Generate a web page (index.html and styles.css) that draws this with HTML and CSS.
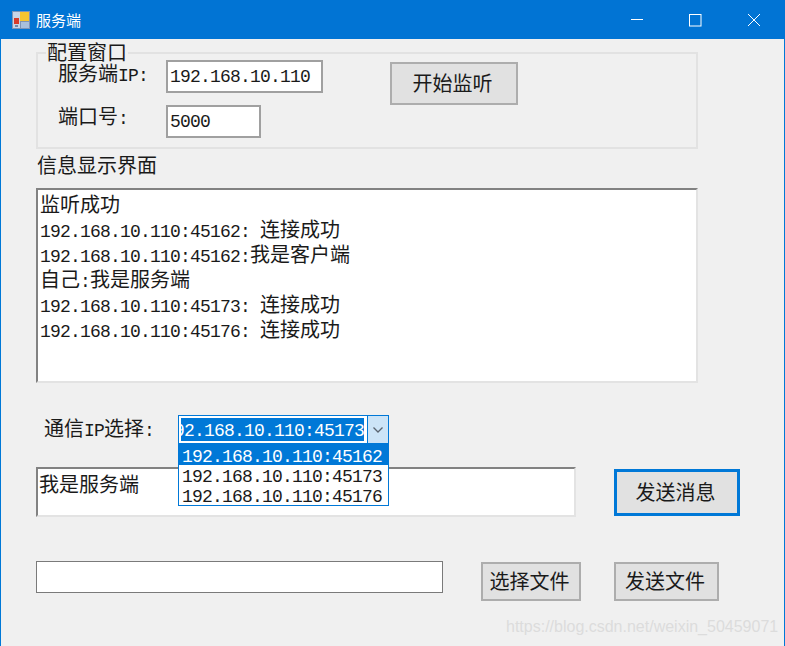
FILE: index.html
```html
<!DOCTYPE html>
<html lang="zh">
<head>
<meta charset="utf-8">
<title>服务端</title>
<link rel="stylesheet" href="styles.css">
</head>
<body>
<div class="window">
  <header class="titlebar">
    <svg class="app-icon" width="18" height="18" viewBox="0 0 18 18">
      <rect x="0" y="0" width="18" height="18" fill="#7f93b5"/>
      <rect x="1" y="1" width="7" height="16" fill="#c9d4e6"/>
      <rect x="2" y="7" width="5" height="6" fill="#d83a2a"/>
      <rect x="3" y="14" width="3" height="2" fill="#6f86ab"/>
      <rect x="8" y="1" width="9" height="9" fill="#f6c531"/>
      <rect x="9" y="11" width="8" height="6" fill="#a9bfdc"/>
    </svg>
    <span class="title">服务端</span>
    <div class="caption-buttons">
      <svg class="cap" width="46" height="39" viewBox="0 0 46 39"><path d="M18 19.5h12" stroke="#fff" fill="none"/></svg>
      <svg class="cap" width="46" height="39" viewBox="0 0 46 39"><rect x="17.500" y="14.500" width="11.500" height="11.500" stroke="#fff" fill="none"/></svg>
      <svg class="cap" width="46" height="39" viewBox="0 0 46 39"><path d="M17 14l12 12M29 14l-12 12" stroke="#fff" fill="none"/></svg>
    </div>
  </header>
  <main class="client">
    <fieldset class="group">
      <legend class="legend">配置窗口</legend>
      <div class="config-grid">
        <span class="label label-ip">服务端<span class="n">IP:</span></span>
        <div class="field field-ip"><span class="n">192.168.10.110</span></div>
        <button class="btn btn-listen">开始监听</button>
        <span class="label label-port">端口号<span class="n">:</span></span>
        <div class="field field-port"><span class="n">5000</span></div>
      </div>
    </fieldset>
    <div class="info-label">信息显示界面</div>
    <div class="log inset">
      <div class="line">监听成功</div>
      <div class="line"><span class="n">192.168.10.110:45162: </span>连接成功</div>
      <div class="line"><span class="n">192.168.10.110:45162:</span>我是客户端</div>
      <div class="line">自己<span class="n">:</span>我是服务端</div>
      <div class="line"><span class="n">192.168.10.110:45173: </span>连接成功</div>
      <div class="line"><span class="n">192.168.10.110:45176: </span>连接成功</div>
    </div>
    <div class="select-row">
      <span class="select-label">通信<span class="n">IP</span>选择<span class="n">:</span></span>
      <div class="combo">
        <div class="combo-value"><div class="combo-sel"><span class="n">192.168.10.110:45173</span></div></div>
        <div class="combo-arrow">
          <svg width="12" height="8" viewBox="0 0 12 8"><path d="M1.500 1.500L6 6l4.500-4.500" stroke="#5a6470" stroke-width="1.300" fill="none"/></svg>
        </div>
        <ul class="dropdown">
          <li class="item item-on"><span class="n">192.168.10.110:45162</span></li>
          <li class="item"><span class="n">192.168.10.110:45173</span></li>
          <li class="item"><span class="n">192.168.10.110:45176</span></li>
        </ul>
      </div>
    </div>
    <div class="message-row">
      <div class="message inset">我是服务端</div>
      <button class="btn btn-send">发送消息</button>
    </div>
    <div class="file-row">
      <div class="file-path"></div>
      <button class="btn btn-choose">选择文件</button>
      <button class="btn btn-file">发送文件</button>
    </div>
    <div class="watermark">https://blog.csdn.net/weixin_50459071</div>
  </main>
</div>
</body>
</html>
```
FILE: styles.css
```css
* { box-sizing: border-box; }
html, body { margin: 0; padding: 0; }
body {
  width: 785px;
  height: 646px;
  overflow: hidden;
  background: #f0f0f0;
  color: #1a1a1a;
  font-family: "Noto Sans CJK SC", sans-serif;
  font-size: 20px;
  line-height: 25px;
}
.n {
  font-family: "Liberation Mono", monospace;
  font-size: 18px;
  letter-spacing: -0.8px;
  line-height: 1;
}
.window {
  width: 785px;
  height: 646px;
  display: flex;
  flex-direction: column;
  border-left: 1px solid #0078d7;
  border-right: 1px solid #0078d7;
}
.titlebar {
  height: 39px;
  margin: 0 -1px;
  background: #0174d4;
  display: flex;
  align-items: center;
  padding-left: 12px;
  color: #fff;
  flex: none;
}
.app-icon { flex: none; }
.title { font-size: 15px; margin-left: 6px; margin-top: -1px; }
.caption-buttons { margin-left: auto; display: flex; gap: 13px; margin-right: 8px; }
.cap { display: block; }
.client { padding-left: 35px; flex: 1; display: flex; flex-direction: column; }

.group {
  width: 662px;
  height: 103px;
  margin: 7px 0 0 0;
  padding: 0;
  border: 2px solid #e2e2e2;
  min-inline-size: 0;
  flex: none;
}
.legend { margin-left: 8px; padding: 0 1px; line-height: 12px; height: 14px; }
.config-grid {
  display: grid;
  grid-template-columns: 108px 224px 128px;
  grid-template-rows: 33px 33px;
  row-gap: 12px;
  padding-left: 20px;
}
.label { align-self: start; }
.label-ip { margin-top: 0; }
.label-port { margin-top: -2px; }
.field {
  background: #fff;
  border: 2px solid #a0a0a0;
  padding-left: 2px;
  line-height: 24px;
  height: 33px;
}
.field-ip { width: 157px; }
.field-port { width: 95px; }
.btn {
  margin: 0;
  padding: 0 3px 2px 0;
  background: #e1e1e1;
  border: 2px solid #adadad;
  color: #1a1a1a;
  font: inherit;
}
.btn-listen { width: 128px; height: 43px; grid-column: 3; grid-row: 1 / span 2; margin-top: 2px; }

.info-label { margin: 3px 0 0 1px; height: 25px; flex: none; }
.inset {
  background: #fff;
  border-style: solid;
  border-width: 2px;
  border-color: #828282 #e3e3e3 #e3e3e3 #828282;
}
.log {
  width: 662px;
  height: 195px;
  margin-top: 11px;
  padding: 1px 0 0 2px;
  flex: none;
}
.line { height: 25px; white-space: pre; }
.select-row { display: flex; align-items: center; margin-top: 32px; padding-left: 8px; height: 29px; flex: none; }
.select-label { width: 134px; margin-top: -4px; }
.combo {
  position: relative;
  width: 211px;
  height: 29px;
  display: flex;
  background: #fff;
  border: 1px solid #0078d7;
}
.combo-value { flex: 1; min-width: 0; padding: 2px 3px 2px 2px; }
.combo-sel {
  display: flex;
  justify-content: flex-end;
  overflow: hidden;
  white-space: nowrap;
  background: #0078d7;
  color: #fff;
  height: 23px;
  line-height: 27px;
}
.combo-sel .n { flex: none; line-height: 27px; }
.combo-arrow {
  width: 21px;
  flex: none;
  background: #cce4f7;
  border-left: 1px solid #0078d7;
  display: flex;
  align-items: center;
  justify-content: center;
}
.dropdown {
  position: absolute;
  left: -1px;
  top: 28px;
  width: 211px;
  margin: 0;
  padding: 0;
  list-style: none;
  background: #fff;
  border: 1px solid #0078d7;
  color: #1a1a1a;
}
.item { height: 20px; line-height: 18px; padding-left: 3px; }
.item-on { background: #0078d7; color: #fff; }

.message-row { display: flex; align-items: center; margin-top: 23px; flex: none; }
.message { width: 540px; height: 50px; padding-left: 1px; line-height: 30px; }
.btn-send { width: 126px; height: 47px; margin-left: 38px; border: 3px solid #0078d7; }
.file-row { display: flex; align-items: flex-start; margin-top: 44px; flex: none; }
.file-path { width: 407px; height: 32px; background: #fff; border: 1px solid #7a7a7a; }
.btn-choose { width: 100px; height: 39px; margin-left: 38px; margin-top: 1px; }
.btn-file { width: 105px; height: 39px; margin-left: 33px; margin-top: 1px; }
.watermark {
  position: absolute;
  left: 506px;
  top: 618px;
  font-family: "Liberation Sans", sans-serif;
  font-size: 16px;
  line-height: 18px;
  color: #dcdcdc;
  white-space: nowrap;
}
```
